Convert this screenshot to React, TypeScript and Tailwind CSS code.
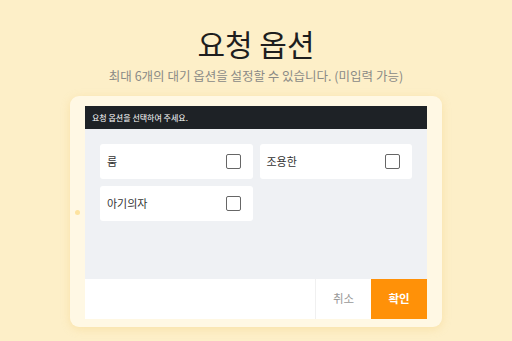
export default function App() {
  const options = ['룸', '조용한', '아기의자'];

  return (
    <div
      className="w-[512px] h-[341px] bg-[#fdefc8] flex flex-col items-center overflow-hidden"
      style={{ fontFamily: '"Noto Sans CJK KR", "Noto Sans", sans-serif' }}
    >
      <h1 className="pt-[24px] text-[30px] leading-[38px] font-normal text-[#1e1e1e]">요청 옵션</h1>
      <p className="mt-[6px] text-[12.5px] leading-[16px] text-[#8a8a86]">
        최대 6개의 대기 옵션을 설정할 수 있습니다. (미입력 가능)
      </p>

      <div className="relative mt-[12px] w-[372px] h-[231px] shrink-0 rounded-[9px] bg-[#fff8e4] px-[15px] pt-[10px] pb-[8px] shadow-[0_2px_8px_rgba(240,200,110,0.35)]">
        <div className="absolute left-[5px] top-[114px] w-[5px] h-[5px] rounded-full bg-[#fde3a0]" />

        <div className="flex flex-col h-full">
          <div className="h-[23px] bg-[#1e2226] text-white text-[8px] px-[7px] flex items-center">
            요청 옵션을 선택하여 주세요.
          </div>

          <div className="h-[150px] bg-[#eff1f4] px-[15px] pt-[15px] grid grid-cols-2 gap-[7px] content-start">
            {options.map((o) => (
              <div
                key={o}
                className="h-[35px] bg-white rounded-[3px] flex items-center justify-between pl-[7px] pr-[12px]"
              >
                <span className="text-[11px] text-[#333333]">{o}</span>
                <span className="w-[15px] h-[15px] border-[1.5px] border-[#666666] rounded-[2px]" />
              </div>
            ))}
          </div>

          <div className="h-[40px] bg-white flex justify-end">
            <button className="w-[56px] h-full border-l border-[#f0f0f0] text-[11.5px] text-[#999999]">
              취소
            </button>
            <button className="w-[56px] h-full bg-[#ff9108] text-[11.5px] font-semibold text-white">
              확인
            </button>
          </div>
        </div>
      </div>
    </div>
  );
}
